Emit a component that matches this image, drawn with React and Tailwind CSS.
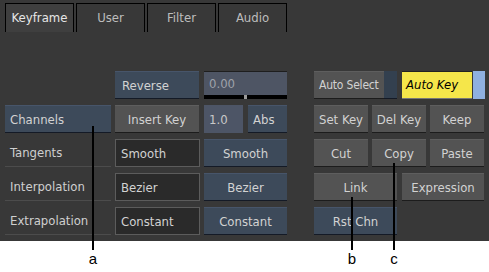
import React from "react";

const font = { fontFamily: '"DejaVu Sans Condensed", "DejaVu Sans", sans-serif' };

function Btn({ w, kind = "blue", align = "center", size = "text-[13px]", children, extra = "" }) {
  const kinds = {
    blue: "bg-[#3d4a5a] border-t border-t-[#47556a] border-b border-b-[#141a26] text-[#d2d2d2]",
    gray: "bg-[#535353] border-t border-t-[#5e5e5e] border-b border-b-[#1c1c1c] text-[#d2d2d2]",
    field: "bg-[#2a2a2a] border border-[#5c5c5c] text-[#d2d2d2]",
    light: "bg-[#4d5566] border-t border-t-[#1e1e1e] text-[#c8c8c8]",
  };
  const al = align === "center" ? "justify-center" : "justify-start pl-[5px]";
  return (
    <div className={`h-[28px] flex items-center leading-none whitespace-nowrap overflow-hidden ${size} ${kinds[kind]} ${al} ${w} ${extra}`}>
      {children}
    </div>
  );
}

function Label({ children }) {
  return (
    <div className="h-[28px] w-[106px] flex items-center pl-[5px] text-[13px] text-[#cfcfcf] border-b border-[#4c4c4c] whitespace-nowrap">
      {children}
    </div>
  );
}

export default function App() {
  return (
    <div className="relative w-[489px] h-[272px] bg-white overflow-hidden" style={font}>
      <div className="h-[241px] bg-[#383838]">
        <div className="flex gap-[2px] pt-[3px] pl-[5px]">
          {["Keyframe", "User", "Filter", "Audio"].map((t, i) => (
            <div
              key={t}
              className={`w-[69px] h-[29px] border border-black border-b-0 flex items-center justify-center text-[13px] ${
                i === 0 ? "bg-[#3f3f3f] text-[#e6e6e6]" : "bg-[#383838] text-[#bdbdbd]"
              }`}
            >
              {t}
            </div>
          ))}
        </div>
        <div className="flex pt-[39px] pl-[5px]">
          {/* Left column */}
          <div className="flex flex-col gap-[6px] w-[106px]">
            <div className="h-[28px]" />
            <Btn w="w-[106px]" align="left">Channels</Btn>
            <Label>Tangents</Label>
            <Label>Interpolation</Label>
            <Label>Extrapolation</Label>
          </div>
          {/* Middle column */}
          <div className="flex flex-col gap-[6px] ml-[4px] w-[172px]">
            <div className="flex gap-[5px]">
              <Btn w="w-[84px]" align="left" extra="pl-[7px]">Reverse</Btn>
              <div className="relative w-[83px] h-[28px] bg-[#4e5564] border-t border-t-[#1e1e1e] flex items-start pl-[5px] pt-[5px] text-[13px] leading-none text-[#9ea2aa]">
                0.00
                <div className="absolute left-0 right-0 bottom-0 h-[4px] bg-black" />
                <div className="absolute left-[40px] bottom-0 w-[3px] h-[4px] bg-[#9a9a9a]" />
              </div>
            </div>
            <div className="flex gap-[5px]">
              <Btn w="w-[84px]" kind="gray">Insert Key</Btn>
              <Btn w="w-[39px]" kind="light" align="left" extra="pl-[4px] border-t-0">1.0</Btn>
              <Btn w="w-[39px]" align="left">Abs</Btn>
            </div>
            <div className="flex gap-[4px]">
              <Btn w="w-[85px]" kind="field" align="left" extra="pl-[5px]">Smooth</Btn>
              <Btn w="w-[83px]">Smooth</Btn>
            </div>
            <div className="flex gap-[4px]">
              <Btn w="w-[85px]" kind="field" align="left" extra="pl-[5px]">Bezier</Btn>
              <Btn w="w-[83px]">Bezier</Btn>
            </div>
            <div className="flex gap-[4px]">
              <Btn w="w-[85px]" kind="field" align="left" extra="pl-[5px]">Constant</Btn>
              <Btn w="w-[83px]">Constant</Btn>
            </div>
          </div>
          {/* Right column */}
          <div className="flex flex-col gap-[6px] ml-[27px] w-[171px]">
            <div className="flex gap-[5px]">
              <div className="flex h-[28px]">
                <Btn w="w-[70px]" kind="gray" align="left" size="text-[12px]" extra="pl-[3px] tracking-[-0.2px]">Auto Select</Btn>
                <div className="w-[13px] h-[28px] bg-[#33404f] border-b border-b-[#141a26]" />
              </div>
              <div className="flex h-[28px] gap-[1px]">
                <div className="w-[70px] h-[28px] bg-[#f5e64a] border-t border-t-[#222] border-b border-b-[#777] flex items-center pl-[4px] text-[13px] italic text-black whitespace-nowrap">
                  Auto Key
                </div>
                <div className="w-[12px] h-[28px] bg-[#8fb0e0]" />
              </div>
            </div>
            <div className="flex gap-[4px]">
              <Btn w="w-[54px]" kind="gray">Set Key</Btn>
              <Btn w="w-[54px]" kind="gray">Del Key</Btn>
              <Btn w="w-[54px]" kind="gray">Keep</Btn>
            </div>
            <div className="flex gap-[4px]">
              <Btn w="w-[54px]" kind="gray">Cut</Btn>
              <Btn w="w-[54px]" kind="gray">Copy</Btn>
              <Btn w="w-[54px]" kind="gray">Paste</Btn>
            </div>
            <div className="flex gap-[5px]">
              <Btn w="w-[83px]" kind="gray">Link</Btn>
              <Btn w="w-[82px]" kind="gray">Expression</Btn>
            </div>
            <div className="flex">
              <Btn w="w-[83px]">Rst Chn</Btn>
            </div>
          </div>
        </div>
      </div>
      {/* callouts */}
      <div className="absolute left-[92px] top-[126px] w-[2px] h-[124px] bg-black" />
      <div className="absolute left-[351px] top-[197px] w-[2px] h-[53px] bg-black" />
      <div className="absolute left-[393px] top-[163px] w-[2px] h-[87px] bg-black" />
      <div className="absolute left-[88px] top-[251px] w-[10px] text-center text-[15px] leading-none text-black" style={{ fontFamily: '"Liberation Sans", sans-serif' }}>a</div>
      <div className="absolute left-[347px] top-[251px] w-[10px] text-center text-[15px] leading-none text-black" style={{ fontFamily: '"Liberation Sans", sans-serif' }}>b</div>
      <div className="absolute left-[389px] top-[251px] w-[10px] text-center text-[15px] leading-none text-black" style={{ fontFamily: '"Liberation Sans", sans-serif' }}>c</div>
    </div>
  );
}
